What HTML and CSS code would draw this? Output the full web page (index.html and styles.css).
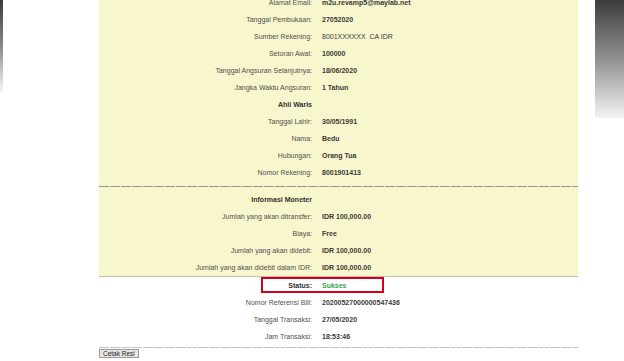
FILE: index.html
```html
<!DOCTYPE html>
<html lang="id">
<head>
    <meta charset="UTF-8">
    <title>Resi Transaksi</title>
    <link rel="stylesheet" href="styles.css">
</head>
<body>
    <div class="page">
        <div class="edge-left"></div>

        <div class="main">
            <div class="details">
                <div class="row"><span class="label">Alamat Email:</span><span class="value">m2u.revamp5@maylab.net</span></div>
                <div class="row"><span class="label">Tanggal Pembukaan:</span><span class="value">27052020</span></div>
                <div class="row"><span class="label">Sumber Rekening:</span><span class="value plain">8001XXXXXX&nbsp;&nbsp;CA IDR</span></div>
                <div class="row"><span class="label">Setoran Awal:</span><span class="value">100000</span></div>
                <div class="row"><span class="label">Tanggal Angsuran Selanjutnya:</span><span class="value">18/06/2020</span></div>
                <div class="row"><span class="label">Jangka Waktu Angsuran:</span><span class="value">1 Tahun</span></div>
                <div class="row"><span class="label heading">Ahli Waris</span></div>
                <div class="row"><span class="label">Tanggal Lahir:</span><span class="value">30/05/1991</span></div>
                <div class="row"><span class="label">Nama:</span><span class="value">Bedu</span></div>
                <div class="row"><span class="label">Hubungan:</span><span class="value">Orang Tua</span></div>
                <div class="row"><span class="label">Nomor Rekening:</span><span class="value">8001901413</span></div>

                <div class="separator"></div>

                <div class="row"><span class="label heading">Informasi Moneter</span></div>
                <div class="row"><span class="label">Jumlah yang akan ditransfer:</span><span class="value">IDR 100,000.00</span></div>
                <div class="row"><span class="label">Biaya:</span><span class="value">Free</span></div>
                <div class="row"><span class="label">Jumlah yang akan didebit:</span><span class="value">IDR 100,000.00</span></div>
                <div class="row"><span class="label">Jumlah yang akan didebit dalam IDR:</span><span class="value">IDR 100,000.00</span></div>
            </div>

            <div class="result">
                <div class="row status-row">
                    <span class="label heading">Status:</span><span class="value success">Sukses</span>
                    <span class="highlight"></span>
                </div>
                <div class="row"><span class="label">Nomor Referensi Bill:</span><span class="value">20200527000000547436</span></div>
                <div class="row"><span class="label">Tanggal Transaksi:</span><span class="value">27/05/2020</span></div>
                <div class="row"><span class="label">Jam Transaksi:</span><span class="value">18:53:46</span></div>
            </div>

            <div class="separator-light"></div>
            <button class="print-btn">Cetak Resi</button>
        </div>

        <div class="edge-right"></div>
    </div>
</body>
</html>
```

FILE: styles.css
```css
body {
    margin: 0;
    padding: 0;
    background: #fff;
    font-family: "Liberation Sans", Arial, sans-serif;
    font-size: 7px;
    overflow: hidden;
}

.page {
    display: flex;
    align-items: flex-start;
    height: 361px;
}

.edge-left {
    width: 3px;
    height: 92px;
    background: linear-gradient(to bottom, #3a3a3a, #8a8a8a 50%, #f7f7f7);
}

.edge-right {
    width: 29px;
    height: 118px;
    margin-left: 17px;
    background: linear-gradient(to bottom, #3c3c3c, #9a9a9a 55%, #f4f4f4);
}

.main {
    width: 479px;
    margin-left: 96px;
}

.details {
    background: #f8f6cd;
    margin-top: -6px;
    border-bottom: 1px solid #bdbdb0;
}

.row {
    display: grid;
    grid-template-columns: 213px 1fr;
    column-gap: 10px;
    height: 17px;
    line-height: 17px;
    white-space: nowrap;
}

.label {
    text-align: right;
    color: #505050;
}

.heading {
    font-weight: bold;
    color: #333;
}

.value {
    font-weight: bold;
    color: #3a3a3a;
}

.value.plain {
    font-weight: normal;
}

.value.success {
    color: #34a853;
}

.separator {
    height: 1px;
    margin: 5px 0 4px;
    background: repeating-linear-gradient(to right, #999990 0 10px, transparent 10px 11px);
}

.status-row {
    position: relative;
}

/* red annotation frame over the status line */
.highlight {
    position: absolute;
    left: 162px;
    top: 0;
    width: 123px;
    height: 16px;
    box-sizing: border-box;
    border: 2px solid #d6001c;
}

.separator-light {
    height: 1px;
    margin-top: 2px;
    background: repeating-linear-gradient(to right, #c4c4c4 0 10px, transparent 10px 11px);
}

.print-btn {
    display: block;
    margin: 1px 0 0;
    padding: 0 3px;
    height: 9px;
    font-family: "Liberation Sans", Arial, sans-serif;
    font-size: 6.5px;
    line-height: 7px;
    color: #222;
    background: #e6e6e6;
    border: 1px solid #9a9a9a;
    border-radius: 0;
}
```
